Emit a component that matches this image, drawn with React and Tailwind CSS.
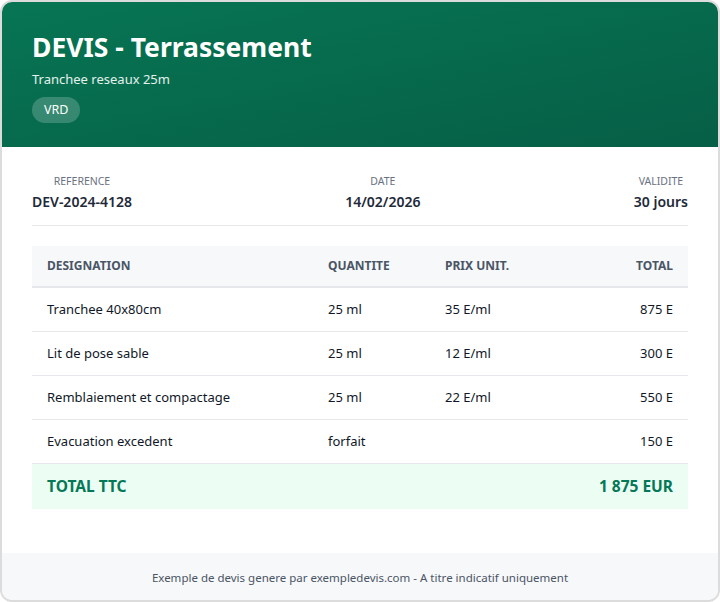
const rows = [
  { name: 'Tranchee 40x80cm', qty: '25 ml', price: '35 E/ml', total: '875 E' },
  { name: 'Lit de pose sable', qty: '25 ml', price: '12 E/ml', total: '300 E' },
  { name: 'Remblaiement et compactage', qty: '25 ml', price: '22 E/ml', total: '550 E' },
  { name: 'Evacuation excedent', qty: 'forfait', price: '', total: '150 E' },
]

function Meta({ label, value }) {
  return (
    <div className="text-center">
      <div className="text-[10.5px] uppercase text-gray-500 leading-[14px]">{label}</div>
      <div className="mt-[5px] text-[14px] font-semibold text-gray-800 leading-[18px]">{value}</div>
    </div>
  )
}

export default function App() {
  return (
    <div className="h-[602px] w-[720px] bg-white" style={{ fontFamily: '"Noto Sans", "Open Sans", sans-serif' }}>
      <div className="h-full flex flex-col rounded-xl border-2 border-[#dcdcdc] overflow-hidden bg-white">
        {/* Header */}
        <div className="h-[145px] shrink-0 bg-gradient-to-br from-[#077553] to-[#065f46] px-[30px] pt-[27px] text-white">
          <h1 className="text-[26.5px] font-bold leading-[36px]">DEVIS - Terrassement</h1>
          <p className="mt-[5px] text-[13px] leading-[18px] text-white/90">Tranchee reseaux 25m</p>
          <span className="mt-[9px] inline-block rounded-full bg-white/20 px-3 py-[4px] text-[12.5px] leading-[18px]">VRD</span>
        </div>

        {/* Body */}
        <div className="flex-1 px-[30px] pt-[27px]">
          <div className="flex justify-between pb-[14px] border-b border-gray-200">
            <Meta label="Reference" value="DEV-2024-4128" />
            <Meta label="Date" value="14/02/2026" />
            <Meta label="Validite" value="30 jours" />
          </div>

          <div className="mt-[20px] text-[13px] text-gray-900">
            <div className="grid grid-cols-[281px_117px_1fr_120px] h-[42px] items-center bg-[#f7f8fa] border-b-2 border-gray-200 text-[12px] font-bold uppercase text-gray-600">
              <div className="pl-[15px]">Designation</div>
              <div className="pl-[15px]">Quantite</div>
              <div className="pl-[15px]">Prix unit.</div>
              <div className="pr-[15px] text-right">Total</div>
            </div>
            {rows.map(r => (
              <div key={r.name} className="grid grid-cols-[281px_117px_1fr_120px] h-[44px] items-center border-b border-gray-200 last:border-b-0">
                <div className="pl-[15px]">{r.name}</div>
                <div className="pl-[15px]">{r.qty}</div>
                <div className="pl-[15px]">{r.price}</div>
                <div className="pr-[15px] text-right">{r.total}</div>
              </div>
            ))}
            <div className="flex h-[45px] items-center justify-between bg-[#ecfdf3] px-[15px] text-[15.5px] font-bold text-[#047857]">
              <span>TOTAL TTC</span>
              <span>1 875 EUR</span>
            </div>
          </div>
        </div>

        {/* Footer */}
        <div className="h-[47px] shrink-0 flex items-center justify-center bg-[#f7f8fa] pt-[2px] text-[11.5px] text-gray-600">
          Exemple de devis genere par exempledevis.com - A titre indicatif uniquement
        </div>
      </div>
    </div>
  )
}
